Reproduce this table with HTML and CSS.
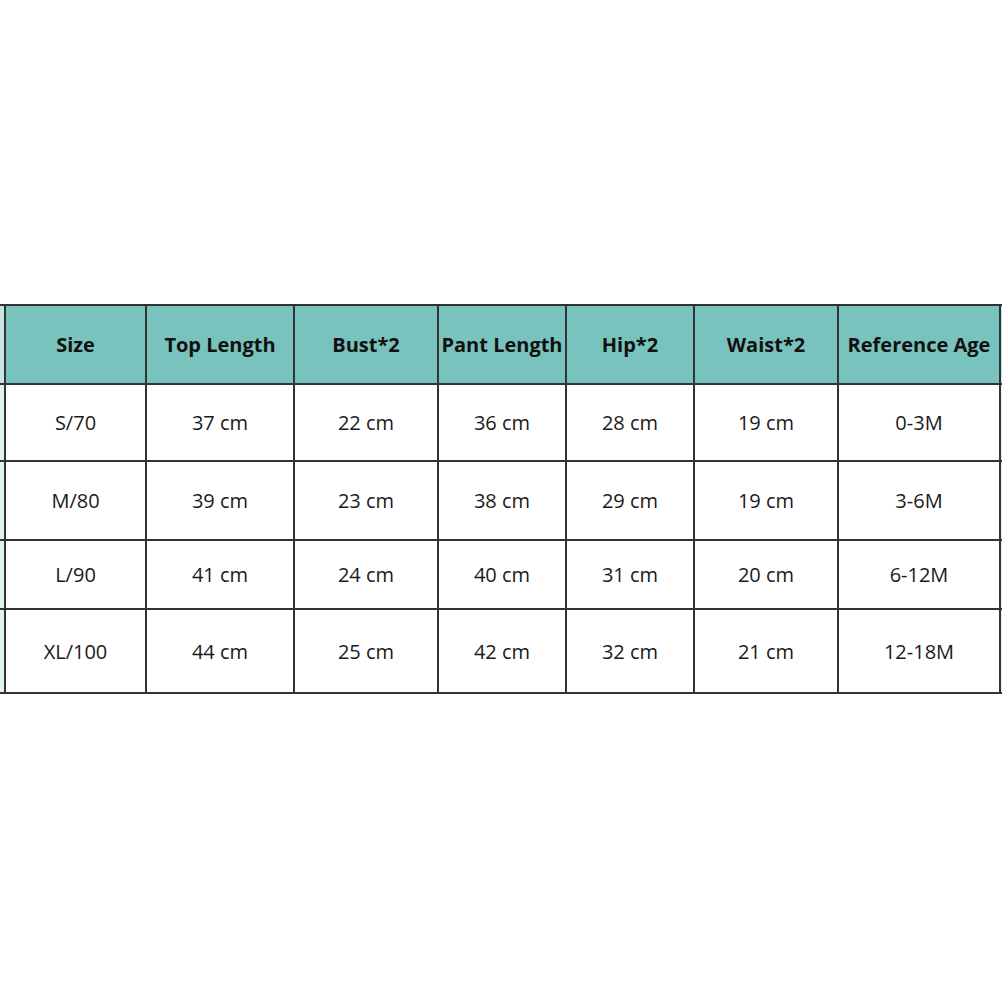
FILE: index.html
```html
<!DOCTYPE html>
<html lang="en">
<head>
<meta charset="utf-8">
<title>Size Chart</title>
<link rel="stylesheet" href="styles.css">
</head>
<body>
<div class="chart">
  <div class="strip strip-head"></div>
  <div class="cell head">Size</div>
  <div class="cell head">Top Length</div>
  <div class="cell head">Bust*2</div>
  <div class="cell head">Pant Length</div>
  <div class="cell head">Hip*2</div>
  <div class="cell head">Waist*2</div>
  <div class="cell head">Reference Age</div>
  <div class="strip strip-head"></div>

  <div class="strip"></div>
  <div class="cell">S/70</div>
  <div class="cell">37 cm</div>
  <div class="cell">22 cm</div>
  <div class="cell">36 cm</div>
  <div class="cell">28 cm</div>
  <div class="cell">19 cm</div>
  <div class="cell">0-3M</div>
  <div class="strip"></div>

  <div class="strip"></div>
  <div class="cell">M/80</div>
  <div class="cell">39 cm</div>
  <div class="cell">23 cm</div>
  <div class="cell">38 cm</div>
  <div class="cell">29 cm</div>
  <div class="cell">19 cm</div>
  <div class="cell">3-6M</div>
  <div class="strip"></div>

  <div class="strip"></div>
  <div class="cell">L/90</div>
  <div class="cell">41 cm</div>
  <div class="cell">24 cm</div>
  <div class="cell">40 cm</div>
  <div class="cell">31 cm</div>
  <div class="cell">20 cm</div>
  <div class="cell">6-12M</div>
  <div class="strip"></div>

  <div class="strip"></div>
  <div class="cell">XL/100</div>
  <div class="cell">44 cm</div>
  <div class="cell">25 cm</div>
  <div class="cell">42 cm</div>
  <div class="cell">32 cm</div>
  <div class="cell">21 cm</div>
  <div class="cell">12-18M</div>
  <div class="strip"></div>
</div>
</body>
</html>
```
FILE: styles.css
```css
html, body {
  margin: 0;
  padding: 0;
  background: #ffffff;
}

body {
  font-family: "Open Sans", "Liberation Sans", sans-serif;
  color: #1a1a1a;
}

.chart {
  margin-top: 304px;
  width: 1002px;
  display: grid;
  grid-template-columns: 4px 139px 146px 142px 126px 126px 142px 160px 1px;
  grid-template-rows: 77px 75px 77px 67px 82px;
  gap: 2px;
  padding: 2px 0;
  background: #333333;
}

.cell {
  background: #ffffff;
  display: flex;
  align-items: center;
  justify-content: center;
  font-size: 20px;
  white-space: nowrap;
}

.head {
  background: #78c3bd;
  font-weight: 700;
  font-size: 20px;
  color: #111111;
  padding-bottom: 1px;
}

.strip {
  background: #e3f3f2;
}

.strip-head {
  background: #c6e6e3;
}
```
